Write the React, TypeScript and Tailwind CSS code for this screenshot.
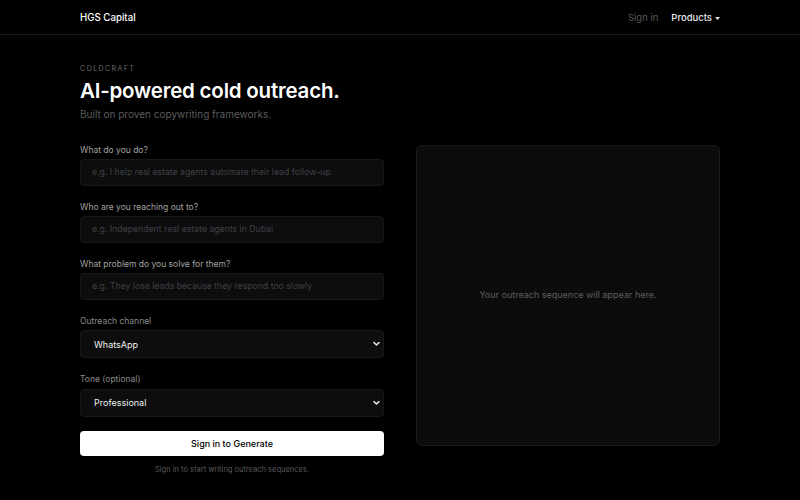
import React from "react";

const fields = [
  { label: "What do you do?", placeholder: "e.g. I help real estate agents automate their lead follow-up" },
  { label: "Who are you reaching out to?", placeholder: "e.g. Independent real estate agents in Dubai" },
  { label: "What problem do you solve for them?", placeholder: "e.g. They lose leads because they respond too slowly" },
];

const selects = [
  { label: "Outreach channel", value: "WhatsApp", options: ["WhatsApp", "Email", "LinkedIn"] },
  { label: "Tone (optional)", value: "Professional", options: ["Professional", "Friendly", "Direct"] },
];

function Chevron() {
  return (
    <svg width="7" height="5" viewBox="0 0 7 5" className="pointer-events-none absolute right-[4px] top-1/2 -translate-y-1/2">
      <path d="M1 1l2.5 2.5L6 1" stroke="#e5e5e5" strokeWidth="1.6" fill="none" strokeLinecap="round" strokeLinejoin="round" />
    </svg>
  );
}

export default function App() {
  return (
    <div className="min-h-screen bg-black text-white" style={{ fontFamily: "Inter, 'Noto Sans', sans-serif" }}>
      <header className="border-b border-[#1c1c1c]">
        <div className="mx-auto flex h-[34px] max-w-[672px] items-center justify-between px-4 pt-[2px]">
          <span className="text-[9.7px] font-medium">HGS Capital</span>
          <nav className="flex items-center gap-[13px] text-[9.5px]">
            <span className="text-[#5a5a5a]">Sign in</span>
            <span className="flex items-center gap-[3px] font-medium text-[#e5e5e5]">
              Products
              <svg width="5" height="3" viewBox="0 0 5 3">
                <path d="M0 0h5L2.5 3z" fill="#e5e5e5" />
              </svg>
            </span>
          </nav>
        </div>
      </header>

      <main className="mx-auto max-w-[672px] px-4 pt-[29px]">
        <p className="text-[7px] tracking-[0.2em] text-[#6b6b6b]">COLDCRAFT</p>
        <h1 className="mt-[3px] text-[20.5px] font-semibold leading-[26px] tracking-[-0.01em]">AI-powered cold outreach.</h1>
        <p className="mt-[3px] text-[10px] text-[#5c5c5c]">Built on proven copywriting frameworks.</p>

        <div className="mt-[23px] grid grid-cols-2 items-start gap-8">
          <div className="flex flex-col">
            {fields.map((f) => (
              <div key={f.label} className="mb-[16px]">
                <label className="block text-[8.5px] leading-[11px] text-[#a3a3a3]">{f.label}</label>
                <input
                  placeholder={f.placeholder}
                  className="mt-[3px] h-[27px] w-full rounded-[4px] border border-[#181818] bg-[#0d0d0d] px-[11px] text-[8.7px] text-white outline-none placeholder:text-[#3d4047]"
                />
              </div>
            ))}
            {selects.map((s, i) => (
              <div key={s.label} className={i === selects.length - 1 ? "mb-[14px]" : "mb-[16px]"}>
                <label className="block text-[8.5px] leading-[11px] text-[#8a8a8a]">{s.label}</label>
                <div className="relative mt-[3px]">
                  <select
                    defaultValue={s.value}
                    className="h-[28px] w-full appearance-none rounded-[4px] border border-[#181818] bg-[#0d0d0d] px-[13px] text-[9px] text-[#f0f0f0] outline-none"
                  >
                    {s.options.map((o) => (
                      <option key={o}>{o}</option>
                    ))}
                  </select>
                  <Chevron />
                </div>
              </div>
            ))}
            <button className="h-[25px] w-full rounded-[4px] bg-white text-[9px] font-medium text-black">
              Sign in to Generate
            </button>
            <p className="mt-[8px] text-center text-[7.5px] text-[#5a5a5a]">Sign in to start writing outreach sequences.</p>
          </div>

          <div className="flex h-[301px] items-center justify-center rounded-[6px] border border-[#1a1a1a] bg-[#0c0c0c]">
            <p className="text-[9px] text-[#5e5e5e]">Your outreach sequence will appear here.</p>
          </div>
        </div>
      </main>
    </div>
  );
}
